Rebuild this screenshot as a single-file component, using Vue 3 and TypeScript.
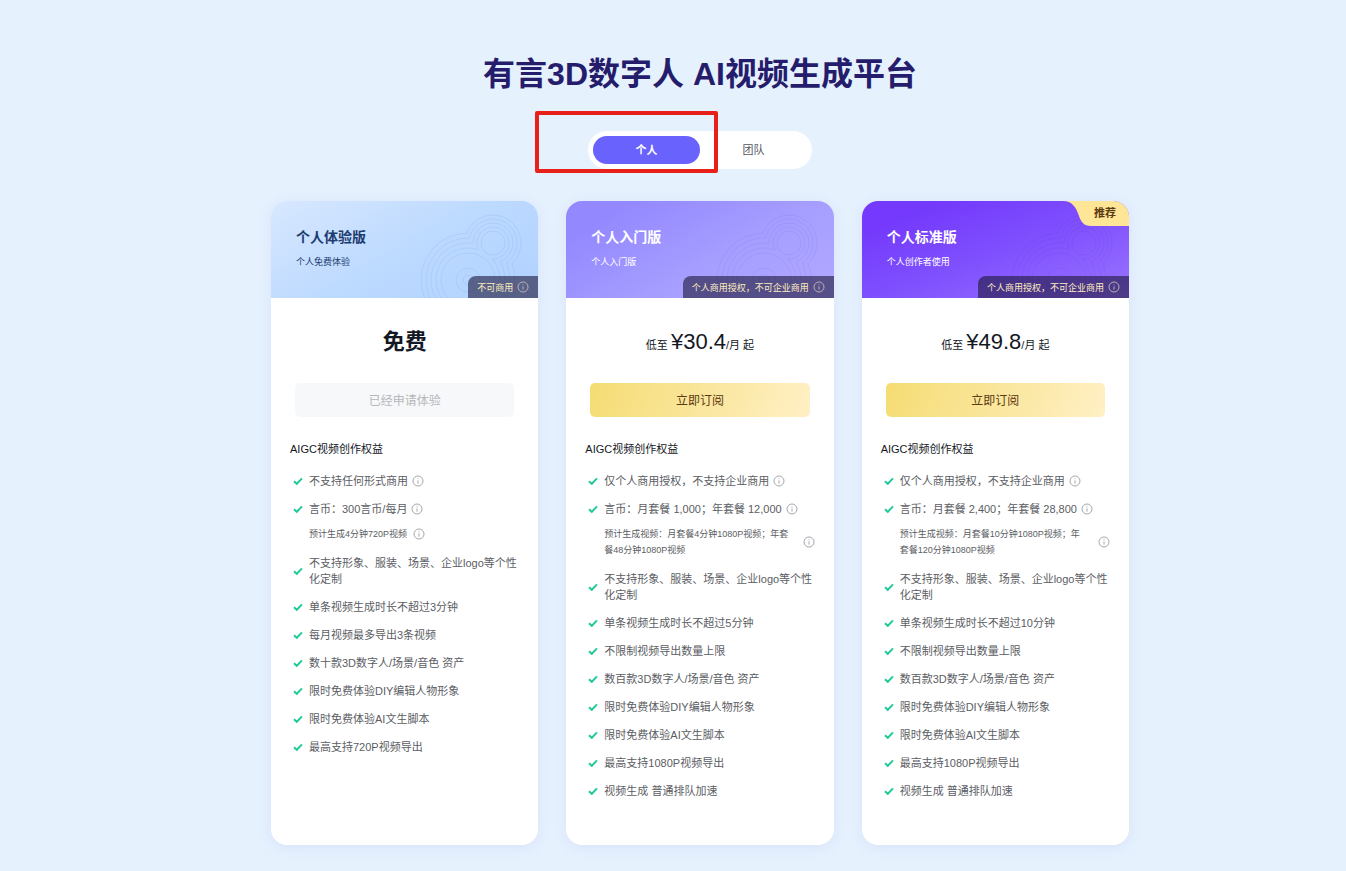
<script setup lang="ts">
import { ref } from 'vue'

interface Benefit {
  text: string
  info?: boolean
  note?: string
}

interface Plan {
  id: string
  name: string
  desc: string
  license: string
  price?: string
  action: string
  disabled?: boolean
  recommended?: boolean
  benefits: Benefit[]
}

const custom = '不支持形象、服装、场景、企业logo等个性化定制'

const plans: Plan[] = [
  {
    id: 'trial',
    name: '个人体验版',
    desc: '个人免费体验',
    license: '不可商用',
    action: '已经申请体验',
    disabled: true,
    benefits: [
      { text: '不支持任何形式商用', info: true },
      { text: '言币：300言币/每月', info: true, note: '预计生成4分钟720P视频' },
      { text: custom },
      { text: '单条视频生成时长不超过3分钟' },
      { text: '每月视频最多导出3条视频' },
      { text: '数十款3D数字人/场景/音色 资产' },
      { text: '限时免费体验DIY编辑人物形象' },
      { text: '限时免费体验AI文生脚本' },
      { text: '最高支持720P视频导出' },
    ],
  },
  {
    id: 'starter',
    name: '个人入门版',
    desc: '个人入门版',
    license: '个人商用授权，不可企业商用',
    price: '¥30.4',
    action: '立即订阅',
    benefits: [
      { text: '仅个人商用授权，不支持企业商用', info: true },
      { text: '言币：月套餐 1,000；年套餐 12,000', info: true, note: '预计生成视频：月套餐4分钟1080P视频；年套餐48分钟1080P视频' },
      { text: custom },
      { text: '单条视频生成时长不超过5分钟' },
      { text: '不限制视频导出数量上限' },
      { text: '数百款3D数字人/场景/音色 资产' },
      { text: '限时免费体验DIY编辑人物形象' },
      { text: '限时免费体验AI文生脚本' },
      { text: '最高支持1080P视频导出' },
      { text: '视频生成 普通排队加速' },
    ],
  },
  {
    id: 'standard',
    name: '个人标准版',
    desc: '个人创作者使用',
    license: '个人商用授权，不可企业商用',
    price: '¥49.8',
    action: '立即订阅',
    recommended: true,
    benefits: [
      { text: '仅个人商用授权，不支持企业商用', info: true },
      { text: '言币：月套餐 2,400；年套餐 28,800', info: true, note: '预计生成视频：月套餐10分钟1080P视频；年套餐120分钟1080P视频' },
      { text: custom },
      { text: '单条视频生成时长不超过10分钟' },
      { text: '不限制视频导出数量上限' },
      { text: '数百款3D数字人/场景/音色 资产' },
      { text: '限时免费体验DIY编辑人物形象' },
      { text: '限时免费体验AI文生脚本' },
      { text: '最高支持1080P视频导出' },
      { text: '视频生成 普通排队加速' },
    ],
  },
]

const tabs = ['个人', '团队']
const active = ref(0)

// Contour line running around a large and a small circle that overlap.
function contour(big: number, small: number): string {
  const [x0, y0, x1, y1] = [62, 79, 87, 42]
  const d = Math.hypot(x1 - x0, y1 - y0)
  const a = (big * big - small * small + d * d) / (2 * d)
  const h = Math.sqrt(Math.max(0, big * big - a * a))
  const ux = (x1 - x0) / d
  const uy = (y1 - y0) / d
  const mx = x0 + a * ux
  const my = y0 + a * uy
  const p = `${mx + h * uy} ${my - h * ux}`
  const q = `${mx - h * uy} ${my + h * ux}`
  return `M${p}A${big} ${big} 0 1 0 ${q}A${small} ${small} 0 1 0 ${p}`
}

const contours = [contour(32, 16), contour(37, 20), contour(42, 24), contour(47, 28)]
</script>

<template>
  <main class="page">
    <h1 class="title">有言3D数字人 AI视频生成平台</h1>

    <div class="switch">
      <div class="tabs" role="tablist">
        <button
          v-for="(tab, i) in tabs"
          :key="tab"
          type="button"
          role="tab"
          class="tab"
          :class="{ active: active === i }"
          :aria-selected="active === i"
          @click="active = i"
        >{{ tab }}</button>
      </div>
      <span class="marker" aria-hidden="true"></span>
    </div>

    <div class="plans">
      <article v-for="plan in plans" :key="plan.id" class="card" :class="plan.id">
        <header class="head">
          <svg class="rings" viewBox="0 0 132 97" aria-hidden="true">
            <g fill="none" stroke="currentColor">
              <circle cx="62" cy="79" r="5" />
              <circle cx="62" cy="79" r="12" />
              <circle cx="62" cy="79" r="27" />
              <circle cx="87" cy="42" r="12" />
              <path v-for="c in contours" :key="c" :d="c" />
            </g>
          </svg>
          <h2 class="name">{{ plan.name }}</h2>
          <p class="desc">{{ plan.desc }}</p>
          <div v-if="plan.recommended" class="ribbon">
            <svg class="ribbon-shape" viewBox="0 0 66 25" preserveAspectRatio="none" aria-hidden="true">
              <path d="M0 0H66V25H28C21 25 18 21 16 15C13 6 9 0 0 0Z" fill="#ffe696" />
            </svg>
            <span class="ribbon-text">推荐</span>
          </div>
          <div class="license">
            {{ plan.license }}
            <svg class="info" viewBox="0 0 12 12" aria-hidden="true">
              <circle cx="6" cy="6" r="5" /><path d="M6 5.3V8.6M6 3.3V4.2" />
            </svg>
          </div>
        </header>

        <div class="body">
          <p class="price">
            <template v-if="plan.price">低至 <span class="amount">{{ plan.price }}</span>/月 起</template>
            <strong v-else class="free">免费</strong>
          </p>
          <button type="button" class="action" :disabled="plan.disabled">{{ plan.action }}</button>
          <h3 class="subtitle">AIGC视频创作权益</h3>
          <ul class="benefits">
            <li v-for="b in plan.benefits" :key="b.text">
              <div class="row">
                <svg class="check" viewBox="0 0 10 10" aria-hidden="true"><path d="M1 5.2L3.8 7.8L9 2.4" /></svg>
                <span>{{ b.text }}</span>
                <svg v-if="b.info" class="info" viewBox="0 0 12 12" aria-hidden="true">
                  <circle cx="6" cy="6" r="5" /><path d="M6 5.3V8.6M6 3.3V4.2" />
                </svg>
              </div>
              <div v-if="b.note" class="note" :class="{ long: b.note.length > 20 }">
                <span>{{ b.note }}</span>
                <svg class="info" viewBox="0 0 12 12" aria-hidden="true">
                  <circle cx="6" cy="6" r="5" /><path d="M6 5.3V8.6M6 3.3V4.2" />
                </svg>
              </div>
            </li>
          </ul>
        </div>
      </article>
    </div>
  </main>
</template>

<style>
body {
  background: #e6f1fe;
}
</style>

<style scoped>
.page {
  box-sizing: border-box;
  min-height: 100vh;
  padding: 50px 0 26px 54px;
  display: flex;
  flex-direction: column;
  align-items: center;
  font-family: "Liberation Sans", "Noto Sans CJK SC", sans-serif;
  color: #141824;
}

h1, h2, h3, p, ul {
  margin: 0;
  padding: 0;
}

button {
  font-family: inherit;
  border: 0;
  padding: 0;
  cursor: pointer;
}

.title {
  font-size: 32px;
  line-height: 48px;
  color: #251d6b;
}

.switch {
  position: relative;
  margin-top: 33px;
}

.tabs {
  display: flex;
  padding: 5px;
  border-radius: 19px;
  background: #fff;
}

.tab {
  width: 107px;
  height: 28px;
  padding-bottom: 2px;
  border-radius: 14px;
  background: transparent;
  font-size: 11px;
  color: #54575f;
}

.tab.active {
  background: #6962fd;
  color: #fff;
  font-weight: 700;
}

.marker {
  position: absolute;
  left: -53px;
  top: -20px;
  width: 175px;
  height: 54px;
  border: 4px solid #e8201a;
  border-radius: 2px;
  pointer-events: none;
}

.plans {
  width: 100%;
  max-width: 858px;
  margin-top: 32px;
  flex: 1;
  display: grid;
  grid-template-columns: repeat(3, 1fr);
  gap: 28px;
}

.card {
  border-radius: 16px;
  overflow: hidden;
  background: #fff;
  box-shadow: 0 2px 14px rgba(110, 130, 210, 0.12);
}

.head {
  position: relative;
  box-sizing: border-box;
  height: 97px;
  padding: 25px 25px 0;
  color: #fff;
}

.trial .head {
  background: linear-gradient(150deg, #d8e8ff 0%, #bddaff 50%, #b0d1ff 100%);
  color: #1c3c70;
}

.starter .head {
  background: linear-gradient(150deg, #9488ff 15%, #a79fff 60%, #b0a8ff 100%);
}

.standard .head {
  background: linear-gradient(160deg, #7439fc 15%, #8052fe 55%, #9a74ff 100%);
}

.rings {
  position: absolute;
  right: 0;
  top: 0;
  width: 132px;
  height: 97px;
  color: rgba(90, 140, 220, 0.14);
}

.starter .rings {
  color: rgba(110, 90, 225, 0.13);
}

.standard .rings {
  color: rgba(80, 30, 210, 0.08);
}

.name {
  position: relative;
  font-size: 14px;
  line-height: 22px;
}

.desc {
  position: relative;
  margin-top: 6px;
  font-size: 9px;
  line-height: 16px;
}

.ribbon {
  position: absolute;
  right: 0;
  top: 0;
  width: 66px;
  height: 25px;
}

.ribbon-shape {
  display: block;
  width: 100%;
  height: 100%;
}

.ribbon-text {
  position: absolute;
  right: 13px;
  top: 0;
  font-size: 11px;
  font-weight: 700;
  line-height: 25px;
  color: #5c3a10;
}

.license {
  position: absolute;
  right: 0;
  bottom: 0;
  display: flex;
  align-items: center;
  gap: 4px;
  height: 22px;
  padding: 0 9px;
  border-radius: 8px 0 0 0;
  background: rgba(27, 22, 56, 0.6);
  font-size: 9px;
  color: #ffeebf;
}

.info {
  flex: none;
  width: 12px;
  height: 12px;
  fill: none;
  stroke: #a5a8ae;
}

.license .info {
  stroke: #b9b1b4;
}

.body {
  padding: 0 19px 40px;
}

.price {
  display: flex;
  align-items: baseline;
  justify-content: center;
  white-space: pre;
  height: 32px;
  margin-top: 28px;
  font-size: 11px;
  line-height: 32px;
}

.amount,
.free {
  font-size: 22px;
}

.action {
  display: block;
  width: calc(100% - 10px);
  height: 34px;
  margin: 25px auto 0;
  padding-bottom: 2px;
  border-radius: 5px;
  background: linear-gradient(110deg, #f5dc73, #fff0c5);
  font-size: 12px;
  color: #5c3a10;
}

.action:disabled {
  background: #f6f8fa;
  color: #b5b7bb;
  cursor: default;
}

.subtitle {
  margin-top: 24px;
  font-size: 11px;
  font-weight: 400;
  line-height: 16px;
}

.benefits {
  display: flex;
  flex-direction: column;
  gap: 12px;
  margin-top: 16px;
  list-style: none;
  font-size: 11px;
  line-height: 16px;
  color: #5b5d63;
}

.row {
  display: flex;
  align-items: center;
  gap: 4px;
  padding-left: 3px;
}

.check {
  flex: none;
  width: 10px;
  height: 10px;
  margin-right: 2px;
  fill: none;
  stroke: #22c99b;
  stroke-width: 2;
}

.note {
  display: flex;
  align-items: center;
  gap: 6px;
  margin-top: 9px;
  padding: 0 0 1px 19px;
  font-size: 9px;
}

.note.long {
  gap: 12px;
}
</style>
